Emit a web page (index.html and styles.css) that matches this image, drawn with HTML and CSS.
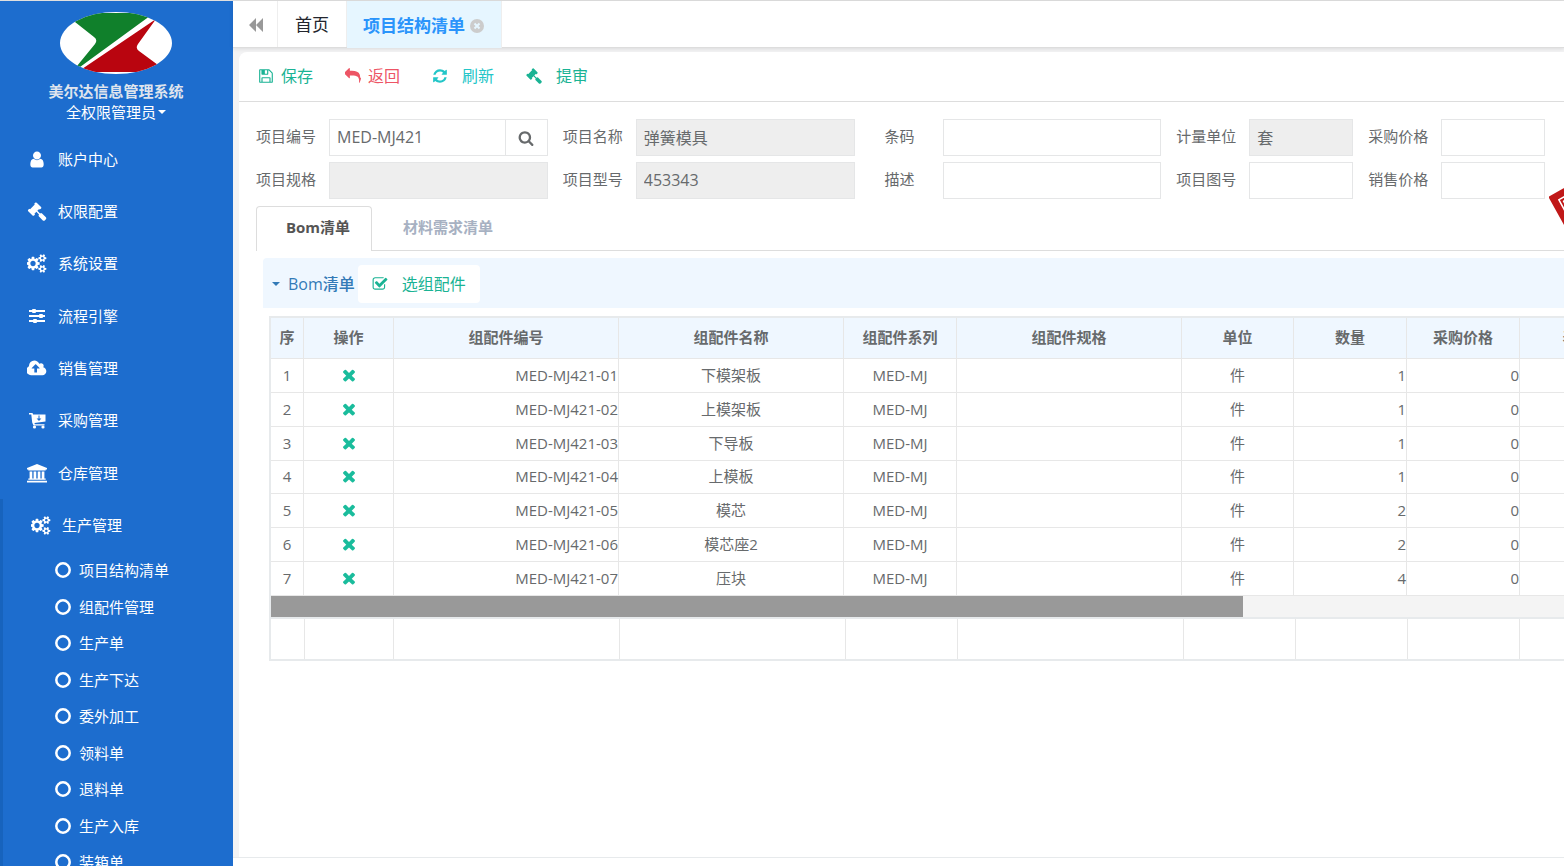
FILE: index.html
```
<!DOCTYPE html>
<html lang="zh-CN">

<head>
	<meta charset="UTF-8">
	<title>美尔达信息管理系统</title>
	<link rel="stylesheet" href="styles.css">
</head>

<body>
	<!-- 图标 -->
	<svg class="sprite" aria-hidden="true">
		<symbol id="i-user" viewBox="-64 0 1920 1792"><path d="M1536 1399q0 109-62.5 187t-150.5 78h-854q-88 0-150.5-78t-62.5-187q0-85 8.5-160.5t31.5-152 58.5-131 94-89 134.5-34.5q131 128 313 128t313-128q76 0 134.5 34.5t94 89 58.5 131 31.5 152 8.5 160.5zm-256-887q0 159-112.5 271.5t-271.5 112.5-271.5-112.5-112.5-271.5 112.5-271.5 271.5-112.5 271.5 112.5 112.5 271.5z"/></symbol>
		<symbol id="i-gavel" viewBox="0 0 1792 1792"><path d="M1771 1536q0 53-37 90l-107 108q-39 37-91 37-53 0-90-37l-363-364q-38-36-38-90 0-53 43-96l-256-256-126 126q-14 14-34 14t-34-14q2 2 12.500 12t12.500 13 10 11.500 10 13.500 6 13.500 5.500 16.500 1.500 18q0 38-28 68-3 3-16.500 18t-19 20.500-18.500 16.500-22 15.500-22 9-26 4.500q-40 0-68-28l-408-408q-28-28-28-68 0-13 4.500-26t9-22 15.500-22 16.500-18.500 20.500-19 18-16.500q30-28 68-28 10 0 18 1.500t16.500 5.500 13.500 6 13.500 10 11.500 10 13 12.500 12 12.500q-14-14-14-34t14-34l348-348q14-14 34-14t34 14q-2-2-12.500-12t-12.500-13-10-11.500-10-13.500-6-13.500-5.500-16.500-1.500-18q0-38 28-68 3-3 16.500-18t19-20.500 18.500-16.500 22-15.500 22-9 26-4.500q40 0 68 28l408 408q28 28 28 68 0 13-4.500 26t-9 22-15.500 22-16.500 18.500-20.500 19-18 16.500q-30 28-68 28-10 0-18-1.500t-16.500-5.500-13.500-6-13.500-10-11.500-10-13-12.500-12-12.500q14 14 14 34t-14 34l-126 126 256 256q43-43 96-43 52 0 91 37l363 363q37 39 37 91z"/></symbol>
		<symbol id="i-cogs" viewBox="0 0 1920 1792"><path d="M832 896q0-106-75-181t-181-75-181 75-75 181 75 181 181 75 181-75 75-181zm768 512q0-52-38-90t-90-38-90 38-38 90q0 53 37.500 90.500t90.500 37.500 90.500-37.500 37.500-90.500zm0-1024q0-52-38-90t-90-38-90 38-38 90q0 53 37.500 90.500t90.500 37.500 90.500-37.500 37.500-90.500zm-384 421v185q0 10-7 19.500t-16 10.500l-155 24q-11 35-32 76 34 48 90 115 7 11 7 20 0 12-7 19-23 30-82.500 89.500t-78.500 59.500q-11 0-21-7l-115-90q-37 19-77 31-11 108-23 155-7 24-30 24h-186q-11 0-20-7.500t-10-17.500l-23-153q-34-10-75-31l-118 89q-7 7-20 7-11 0-21-8-144-133-144-160 0-9 7-19 10-14 41-53t47-61q-23-44-35-82l-152-24q-10-1-17-9.500t-7-19.500v-185q0-10 7-19.500t16-10.500l155-24q11-35 32-76-34-48-90-115-7-11-7-20 0-12 7-20 22-30 82-89t79-59q11 0 21 7l115 90q34-18 77-32 11-108 23-154 7-24 30-24h186q11 0 20 7.500t10 17.500l23 153q34 10 75 31l118-89q8-7 20-7 11 0 21 8 144 133 144 160 0 8-7 19-12 16-42 54t-45 60q23 48 34 82l152 23q10 2 17 10.500t7 19.500zm640 533v140q0 16-149 31-12 27-30 52 51 113 51 138 0 4-4 7-122 71-124 71-8 0-46-47t-52-68q-20 2-30 2t-30-2q-14 21-52 68t-46 47q-2 0-124-71-4-3-4-7 0-25 51-138-18-25-30-52-149-15-149-31v-140q0-16 149-31 13-29 30-52-51-113-51-138 0-4 4-7 4-2 35-20t59-34 30-16q8 0 46 46.500t52 67.500q20-2 30-2t30 2q51-71 92-112l6-2q4 0 124 70 4 3 4 7 0 25-51 138 17 23 30 52 149 15 149 31zm0-1024v140q0 16-149 31-12 27-30 52 51 113 51 138 0 4-4 7-122 71-124 71-8 0-46-47t-52-68q-20 2-30 2t-30-2q-14 21-52 68t-46 47q-2 0-124-71-4-3-4-7 0-25 51-138-18-25-30-52-149-15-149-31v-140q0-16 149-31 13-29 30-52-51-113-51-138 0-4 4-7 4-2 35-20t59-34 30-16q8 0 46 46.500t52 67.500q20-2 30-2t30 2q51-71 92-112l6-2q4 0 124 70 4 3 4 7 0 25-51 138 17 23 30 52 149 15 149 31z"/></symbol>
		<symbol id="i-sliders" viewBox="0 0 20 19"><path d="M2 3h3v2H2zM9 3h9v2H9zM2 8h10v2H2zM16 8h2v2h-2zM2 13h4v2H2zM10 13h8v2h-8z"/><rect x="5" y="2" width="4" height="4" rx="1"/><rect x="12" y="7" width="4" height="4" rx="1"/><rect x="6" y="12" width="4" height="4" rx="1"/></symbol>
		<symbol id="i-cloud" viewBox="0 0 1920 1792"><path d="M1216 864q0-14-9-23l-352-352q-9-9-23-9t-23 9l-351 351q-10 12-10 24 0 14 9 23t23 9h224v352q0 13 9.500 22.500t22.500 9.500h192q13 0 22.500-9.500t9.500-22.500v-352h224q13 0 22.500-9.500t9.500-22.500zm640 288q0 159-112.500 271.500t-271.500 112.500h-1088q-185 0-316.500-131.500t-131.500-316.500q0-130 70-240t188-165q-2-30-2-43 0-212 150-362t362-150q156 0 285.500 87t188.500 231q71-62 166-62 106 0 181 75t75 181q0 76-41 138 130 31 213.500 135.500t83.500 238.500z"/></symbol>
		<symbol id="i-cart" viewBox="0 0 20 19"><path fill-rule="evenodd" d="M2 2h3.500l.6 1.500H18.500V10.500L7.500 12l.3 1.200H17.500V14.500H6.500L5.200 11.500 4.300 3.500H2zM11.500 4.500v3H9.600L12 10l2.400-2.500h-1.900v-3z"/><circle cx="7.500" cy="16" r="1.600"/><circle cx="16" cy="16" r="1.600"/></symbol>
		<symbol id="i-bank" viewBox="0 0 20 19"><path d="M10 0L20 4v1.500h-1.300v1H1.300v-1H0V4zM2.600 7.500h2.700V14.500h1.300V7.500h2.700V14.500h1.400V7.500h2.700V14.500h1.300V7.500h2.700V14.500h1.300v1.300H1.300v-1.300h1.300zM0 16.800h20v1.700H0z"/></symbol>
		<symbol id="i-ring" viewBox="0 0 16 16"><circle cx="8" cy="8" r="6.700" fill="none" stroke="currentColor" stroke-width="2.500"/></symbol>
		<symbol id="i-backward" viewBox="0 0 16 14"><path d="M8 0v14L1 7zM15 0v14L8 7z"/></symbol>
		<symbol id="i-close" viewBox="0 0 14 14"><circle cx="7" cy="7" r="7"/><path d="M4.500 4.500l5 5M9.500 4.500l-5 5" stroke="#e6f6ff" stroke-width="2"/></symbol>
		<symbol id="i-save" viewBox="0 0 1792 1792"><path d="M512 1536h768v-384h-768v384zm896 0h128v-896q0-14-10-38.500t-20-34.500l-281-281q-10-10-34-20t-39-10v416q0 40-28 68t-68 28h-576q-40 0-68-28t-28-68v-416h-128v1280h128v-416q0-40 28-68t68-28h832q40 0 68 28t28 68v416zm-384-928v-320q0-13-9.500-22.500t-22.500-9.500h-192q-13 0-22.500 9.500t-9.500 22.500v320q0 13 9.500 22.500t22.500 9.500h192q13 0 22.500-9.500t9.500-22.500zm640 32v928q0 40-28 68t-68 28h-1344q-40 0-68-28t-28-68v-1344q0-40 28-68t68-28h928q40 0 88 20t76 48l280 280q28 28 48 76t20 88z"/></symbol>
		<symbol id="i-reply" viewBox="0 0 1792 1792"><path d="M1792 1120q0 166-127 451-3 7-10.500 24t-13.500 30-13 22q-12 17-28 17-15 0-23.500-10t-8.500-25q0-9 2.500-26.500t2.500-23.500q5-68 5-123 0-112-19.500-200.500t-54-153.500-89-112-118-79.500-149.500-47-175.500-24.500-203.500-7h-224v256q0 26-19 45t-45 19-45-19l-512-512q-19-19-19-45t19-45l512-512q19-19 45-19t45 19 19 45v256h224q713 0 875 403 53 134 53 333z"/></symbol>
		<symbol id="i-refresh" viewBox="0 0 1792 1792"><path d="M1639 1056q0 5-1 7-64 268-268 434.500t-478 166.500q-146 0-282.500-55t-243.500-157l-129 129q-19 19-45 19t-45-19-19-45v-448q0-26 19-45t45-19h448q26 0 45 19t19 45-19 45l-137 137q71 66 161 102t187 36q134 0 250-65t186-179q11-17 53-117 8-23 30-23h192q13 0 22.500 9.500t9.500 22.500zm25-800v448q0 26-19 45t-45 19h-448q-26 0-45-19t-19-45 19-45l138-138q-148-137-349-137-134 0-250 65t-186 179q-11 17-53 117-8 23-30 23h-199q-13 0-22.500-9.500t-9.500-22.500v-7q65-268 270-434.500t480-166.500q146 0 284 55.500t245 156.500l130-129q19-19 45-19t45 19 19 45z"/></symbol>
		<symbol id="i-search" viewBox="0 0 1792 1792"><path d="M1216 832q0-185-131.500-316.500t-316.500-131.500-316.500 131.500-131.500 316.500 131.500 316.500 316.500 131.500 316.500-131.500 131.500-316.500zm512 832q0 52-38 90t-90 38q-54 0-90-38l-343-342q-179 124-399 124-143 0-273.500-55.500t-225-150-150-225-55.500-273.500 55.500-273.500 150-225 225-150 273.500-55.500 273.500 55.500 225 150 150 225 55.500 273.500q0 220-124 399l343 343q37 37 37 90z"/></symbol>
		<symbol id="i-check" viewBox="0 0 1792 1792"><path d="M1472 930v318q0 119-84.500 203.500t-203.500 84.500h-832q-119 0-203.500-84.500t-84.500-203.500v-832q0-119 84.500-203.500t203.500-84.500h832q63 0 117 25 15 7 18 23 3 17-9 29l-49 49q-10 10-23 10-3 0-9-2-23-6-45-6h-832q-66 0-113 47t-47 113v832q0 66 47 113t113 47h832q66 0 113-47t47-113v-254q0-13 9-22l64-64q10-10 23-10 6 0 12 3 20 8 20 29zm231-489l-814 814q-24 24-57 24t-57-24l-430-430q-24-24-24-57t24-57l110-110q24-24 57-24t57 24l263 263 647-647q24-24 57-24t57 24l110 110q24 24 24 57t-24 57z"/></symbol>
		<symbol id="i-times" viewBox="0 0 1792 1792"><path d="M1490 1322q0 40-28 68l-136 136q-28 28-68 28t-68-28l-294-294-294 294q-28 28-68 28t-68-28l-136-136q-28-28-28-68t28-68l294-294-294-294q-28-28-28-68t28-68l136-136q28-28 68-28t68 28l294 294 294-294q28-28 68-28t68 28l136 136q28 28 28 68t-28 68l-294 294 294 294q28 28 28 68z"/></symbol>
	</svg>

	<div class="wrapper">
		<nav class="sidebar">
			<div class="nav_header">
				<svg class="logo" viewBox="0 0 112 62">
					<defs><clipPath id="oval"><ellipse cx="56" cy="31" rx="56" ry="31"/></clipPath></defs>
					<g clip-path="url(#oval)">
						<rect width="112" height="62" fill="#fff"/>
						<path d="M12 1H94L20 55L17 54L35 32Q38 28 34 25L15 10z" fill="#10802b"/>
						<path d="M96 7L78 32Q75 36 79 39L98 53V60H18L22 57z" fill="#b9050f"/>
					</g>
				</svg>
				<strong>美尔达信息管理系统</strong>
				<a href="#" class="role">全权限管理员<b class="caret"></b></a>
			</div>
			<ul class="menu">
				<li><a href="#"><svg class="icon"><use href="#i-user"/></svg>账户中心</a></li>
				<li><a href="#"><svg class="icon"><use href="#i-gavel"/></svg>权限配置</a></li>
				<li><a href="#"><svg class="icon"><use href="#i-cogs"/></svg>系统设置</a></li>
				<li><a href="#"><svg class="icon"><use href="#i-sliders"/></svg>流程引擎</a></li>
				<li><a href="#"><svg class="icon"><use href="#i-cloud"/></svg>销售管理</a></li>
				<li><a href="#"><svg class="icon"><use href="#i-cart"/></svg>采购管理</a></li>
				<li><a href="#"><svg class="icon"><use href="#i-bank"/></svg>仓库管理</a></li>
				<li class="active">
					<a href="#"><svg class="icon"><use href="#i-cogs"/></svg>生产管理</a>
					<ul class="submenu">
						<li><a href="#"><svg class="ring"><use href="#i-ring"/></svg>项目结构清单</a></li>
						<li><a href="#"><svg class="ring"><use href="#i-ring"/></svg>组配件管理</a></li>
						<li><a href="#"><svg class="ring"><use href="#i-ring"/></svg>生产单</a></li>
						<li><a href="#"><svg class="ring"><use href="#i-ring"/></svg>生产下达</a></li>
						<li><a href="#"><svg class="ring"><use href="#i-ring"/></svg>委外加工</a></li>
						<li><a href="#"><svg class="ring"><use href="#i-ring"/></svg>领料单</a></li>
						<li><a href="#"><svg class="ring"><use href="#i-ring"/></svg>退料单</a></li>
						<li><a href="#"><svg class="ring"><use href="#i-ring"/></svg>生产入库</a></li>
						<li><a href="#"><svg class="ring"><use href="#i-ring"/></svg>装箱单</a></li>
					</ul>
				</li>
			</ul>
		</nav>

		<div class="main">
			<div class="page_tabs">
				<button type="button" class="roll" aria-label="向左"><svg><use href="#i-backward"/></svg></button>
				<a href="#" class="page_tab">首页</a>
				<a href="#" class="page_tab on">项目结构清单<svg><use href="#i-close"/></svg></a>
			</div>

			<div class="content">
				<div class="toolbar">
					<button type="button" class="green"><svg><use href="#i-save"/></svg>保存</button>
					<button type="button" class="red"><svg><use href="#i-reply"/></svg>返回</button>
					<button type="button" class="cyan wide"><svg><use href="#i-refresh"/></svg>刷新</button>
					<button type="button" class="green wide"><svg><use href="#i-gavel"/></svg>提审</button>
				</div>

				<form class="form">
					<div class="field">
						<label for="code">项目编号</label>
						<div class="group">
							<input type="text" id="code" value="MED-MJ421">
							<button type="button" aria-label="查询"><svg><use href="#i-search"/></svg></button>
						</div>
					</div>
					<div class="field"><label for="name">项目名称</label><input type="text" id="name" value="弹簧模具" readonly></div>
					<div class="field"><label for="barcode">条码</label><input type="text" id="barcode"></div>
					<div class="field"><label for="unit">计量单位</label><input type="text" id="unit" value="套" readonly></div>
					<div class="field"><label for="buy">采购价格</label><input type="text" id="buy"></div>
					<div class="field"><label for="spec">项目规格</label><input type="text" id="spec" readonly></div>
					<div class="field"><label for="model">项目型号</label><input type="text" id="model" value="453343" readonly></div>
					<div class="field"><label for="remark">描述</label><input type="text" id="remark"></div>
					<div class="field"><label for="drawing">项目图号</label><input type="text" id="drawing"></div>
					<div class="field"><label for="sell">销售价格</label><input type="text" id="sell"></div>
				</form>
				<!-- 审核印章 -->
				<svg class="stamp" viewBox="0 0 140 140">
					<g transform="translate(0 70) rotate(-29)" fill="none" stroke="#c01818">
						<rect x="3" y="3" width="120" height="60" stroke-width="7"/>
						<rect x="9" y="9" width="108" height="48" stroke-width="2"/>
						<rect x="13" y="13" width="100" height="40" stroke-width="2"/>
					</g>
				</svg>

				<ul class="tabs">
					<li class="on"><a href="#">Bom清单</a></li>
					<li><a href="#">材料需求清单</a></li>
				</ul>

				<div class="panel">
					<div class="panel_head">
						<a href="#"><b class="caret"></b>Bom清单</a>
						<button type="button" class="pick"><svg><use href="#i-check"/></svg>选组配件</button>
					</div>

					<div class="grid">
						<table>
							<colgroup>
								<col class="c_no"><col class="c_op"><col class="c_l"><col class="c_l"><col class="c_s"><col class="c_l"><col class="c_u"><col class="c_s"><col class="c_s"><col class="c_m">
							</colgroup>
							<thead>
								<tr><th>序</th><th>操作</th><th>组配件编号</th><th>组配件名称</th><th>组配件系列</th><th>组配件规格</th><th>单位</th><th>数量</th><th>采购价格</th><th>表面处理</th></tr>
							</thead>
							<tbody>
								<tr><td>1</td><td><button type="button" aria-label="删除"><svg><use href="#i-times"/></svg></button></td><td class="r">MED-MJ421-01</td><td>下模架板</td><td>MED-MJ</td><td></td><td>件</td><td class="r">1</td><td class="r">0</td><td></td></tr>
								<tr><td>2</td><td><button type="button" aria-label="删除"><svg><use href="#i-times"/></svg></button></td><td class="r">MED-MJ421-02</td><td>上模架板</td><td>MED-MJ</td><td></td><td>件</td><td class="r">1</td><td class="r">0</td><td></td></tr>
								<tr><td>3</td><td><button type="button" aria-label="删除"><svg><use href="#i-times"/></svg></button></td><td class="r">MED-MJ421-03</td><td>下导板</td><td>MED-MJ</td><td></td><td>件</td><td class="r">1</td><td class="r">0</td><td></td></tr>
								<tr><td>4</td><td><button type="button" aria-label="删除"><svg><use href="#i-times"/></svg></button></td><td class="r">MED-MJ421-04</td><td>上模板</td><td>MED-MJ</td><td></td><td>件</td><td class="r">1</td><td class="r">0</td><td></td></tr>
								<tr><td>5</td><td><button type="button" aria-label="删除"><svg><use href="#i-times"/></svg></button></td><td class="r">MED-MJ421-05</td><td>模芯</td><td>MED-MJ</td><td></td><td>件</td><td class="r">2</td><td class="r">0</td><td></td></tr>
								<tr><td>6</td><td><button type="button" aria-label="删除"><svg><use href="#i-times"/></svg></button></td><td class="r">MED-MJ421-06</td><td>模芯座2</td><td>MED-MJ</td><td></td><td>件</td><td class="r">2</td><td class="r">0</td><td></td></tr>
								<tr><td>7</td><td><button type="button" aria-label="删除"><svg><use href="#i-times"/></svg></button></td><td class="r">MED-MJ421-07</td><td>压块</td><td>MED-MJ</td><td></td><td>件</td><td class="r">4</td><td class="r">0</td><td></td></tr>
							</tbody>
						</table>
						<div class="scroll"><div class="thumb" style="width: 75.2%"></div></div>
						<table class="sum">
							<colgroup>
								<col class="c_no"><col class="c_op"><col class="c_l"><col class="c_l"><col class="c_s"><col class="c_l"><col class="c_s"><col class="c_s"><col class="c_s"><col class="c_m">
							</colgroup>
							<tbody>
								<tr><td></td><td></td><td></td><td></td><td></td><td></td><td></td><td></td><td></td><td></td></tr>
							</tbody>
						</table>
					</div>
				</div>
			</div>
			<div class="footer"></div>
		</div>
	</div>
</body>

</html>
```
FILE: styles.css
```
* {
	margin: 0;
	padding: 0;
	box-sizing: border-box;
}

body {
	font-family: "Open Sans", "Noto Sans CJK SC", sans-serif;
	font-size: 15px;
	line-height: 20px;
	color: #676a6c;
	background: #f3f3f4;
	overflow: hidden;
}

a {
	color: inherit;
	text-decoration: none;
}

ul {
	list-style: none;
}

button {
	font: inherit;
	color: inherit;
	background: none;
	border: none;
	cursor: pointer;
}

svg {
	fill: currentColor;
	flex: none;
}

.sprite {
	position: absolute;
	width: 0;
	height: 0;
}

.caret {
	display: inline-block;
	border: 4px solid transparent;
	border-top-color: currentColor;
	border-bottom: none;
}

.wrapper {
	display: flex;
	height: 100vh;
	border-top: 1px solid #dfdfdf;
}

/* 左侧菜单 */
.sidebar {
	width: 233px;
	flex: none;
	background: #1d6dce;
	color: #fff;
	overflow: hidden;
}

.nav_header {
	display: flex;
	flex-direction: column;
	align-items: center;
	padding: 11px 1px 11px 0;
}

.logo {
	width: 112px;
	height: 62px;
	margin-bottom: 6px;
}

.nav_header strong {
	color: #dfe4ed;
	line-height: 22px;
}

.role {
	display: flex;
	align-items: center;
	gap: 2px;
}

.menu > li:nth-child(3n) {
	margin-bottom: 1px;
}

.menu > li > a {
	display: flex;
	align-items: center;
	height: 52px;
	padding-left: 27px;
	gap: 11px;
}

.menu > .active {
	border-left: 3px solid #1763bd;
}

.menu > .active > a {
	padding-left: 28px;
}

.icon {
	width: 20px;
	height: 19px;
}

.submenu {
	margin-top: 1px;
}

.submenu a {
	display: flex;
	align-items: center;
	height: 36px;
	padding-left: 52px;
	gap: 8px;
}

.submenu li:nth-child(odd) {
	margin-bottom: 1px;
}

.ring {
	width: 16px;
	height: 16px;
}

/* 右侧 */
.main {
	flex: 1;
	min-width: 0;
	display: flex;
	flex-direction: column;
}

.page_tabs {
	display: flex;
	height: 47px;
	background: #fff;
	border-bottom: 1px solid #ddd;
	box-shadow: 0 1px 4px rgba(0, 0, 0, 0.1);
	font-size: 17px;
}

.roll {
	width: 45px;
	padding-left: 2px;
	border-right: 1px solid #eee;
	color: #999;
}

.roll svg {
	display: block;
	width: 16px;
	height: 14px;
	margin: 2px auto 0;
}

.page_tab {
	display: flex;
	align-items: center;
	padding: 2px 17px 0;
	gap: 5px;
	color: #23262e;
	border-right: 1px solid #eee;
}

.page_tab.on {
	padding-left: 16px;
	font-weight: bold;
	color: #2a94fb;
	background: #e6f6ff;
	height: 47px;
}

.page_tab svg {
	width: 14px;
	height: 14px;
	color: #ccc;
}

.content {
	position: relative;
	flex: 1;
	min-height: 0;
	margin: 4px 0 0 6px;
	background: #fff;
	border-top-left-radius: 8px;
	overflow: hidden;
}

.toolbar {
	display: flex;
	height: 50px;
	padding: 0 0 2px 19px;
	gap: 32px;
	font-size: 16px;
	border-bottom: 1px solid #ddd;
}

.toolbar button {
	display: flex;
	align-items: center;
	gap: 7px;
}

.toolbar .wide {
	gap: 14px;
}

.toolbar svg,
.pick svg {
	width: 16px;
	height: 16px;
}

.green {
	color: #1ab394;
}

.red {
	color: #ed5565;
}

.cyan {
	color: #23c6c8;
}

/* 表单 */
.form {
	display: grid;
	grid-template-columns: repeat(3, minmax(0, 292fr)) repeat(2, minmax(0, 177fr));
	gap: 6px 15px;
	padding: 17px 19px 7px 17px;
}

.field {
	display: flex;
	min-width: 0;
}

.field label {
	width: 60px;
	margin-right: 13px;
	flex: none;
	line-height: 34px;
	text-align: center;
}

.field input {
	flex: 1;
	min-width: 0;
	width: 100%;
	height: 37px;
	padding: 0 7px 1px;
	font: inherit;
	font-size: 16px;
	color: inherit;
	background: #fff;
	border: 1px solid #e5e6e7;
	outline: none;
}

.field input[readonly] {
	background: #eee;
}

.group {
	display: flex;
	flex: 1;
	min-width: 0;
}

.group button {
	width: 42px;
	flex: none;
	border: 1px solid #e5e6e7;
	border-left: none;
}

.group svg {
	display: block;
	width: 16px;
	height: 16px;
	margin: 0 auto;
}

.stamp {
	position: absolute;
	top: 75px;
	right: -125px;
	width: 140px;
	height: 140px;
}

/* 页签 */
.tabs {
	display: flex;
	margin-left: 17px;
	border-bottom: 1px solid #ddd;
	font-weight: bold;
	color: #a7b1c2;
}

.tabs a {
	display: block;
	padding: 10px 22px 13px 30px;
	border: 1px solid transparent;
	border-bottom: none;
}

.tabs .on {
	margin-bottom: -1px;
}

.tabs .on a {
	color: #555;
	background: #fff;
	border-color: #ddd;
	border-radius: 4px 4px 0 0;
	padding: 10px 21px 14px 29px;
}

.panel {
	margin: 7px 0 0 24px;
}

.panel_head {
	display: flex;
	align-items: center;
	height: 50px;
	padding: 2px 0 0 9px;
	gap: 3px;
	font-size: 16px;
	background: #eff7ff;
	border-top-left-radius: 4px;
}

.panel_head a {
	display: flex;
	align-items: center;
	gap: 8px;
	color: #337ab7;
	font-weight: 500;
}

.pick {
	display: flex;
	align-items: center;
	height: 38px;
	padding: 0 14px;
	gap: 14px;
	color: #1ab394;
	background: #fff;
	border-radius: 4px;
}

/* 明细表 */
.grid {
	margin: 8px 0 0 6px;
	border: 2px solid #e7eaec;
	border-right: none;
	overflow: hidden;
}

table {
	table-layout: fixed;
	width: 1395px;
	border-collapse: separate;
	border-spacing: 0;
}

.c_no {
	width: 33px;
}

.c_op {
	width: 90px;
}

.c_l {
	width: 225px;
}

.c_s {
	width: 113px;
}

.c_u {
	width: 112px;
}

.c_m {
	width: 146px;
}

th,
td {
	text-align: center;
	border-right: 1px solid #e7e7e7;
	border-bottom: 1px solid #e7e7e7;
}

th {
	height: 41px;
	padding-bottom: 2px;
	background: #eff7ff;
}

td {
	height: 34px;
	padding-bottom: 2px;
}

tr:nth-child(4) td {
	height: 33px;
}

td.r {
	text-align: right;
}

td button {
	display: block;
	margin: 0 auto;
}

td svg {
	display: block;
	width: 18px;
	height: 18px;
	color: #1abc9c;
}

.scroll {
	height: 23px;
	background: #f4f4f4;
	border-bottom: 2px solid #e7eaec;
}

.thumb {
	height: 21px;
	background: #999;
}

/* 合计行 */
.sum .c_no {
	width: 34px;
}

.sum .c_op {
	width: 89px;
}

.sum .c_l {
	width: 226px;
}

.sum .c_s {
	width: 112px;
}

.sum td {
	height: 40px;
	border-bottom: none;
}

.footer {
	height: 9px;
	background: #fff;
	border-top: 1px solid #e7eaec;
}
```
